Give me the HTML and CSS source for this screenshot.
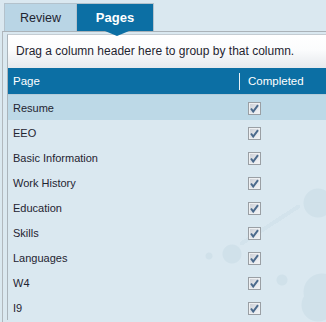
FILE: index.html
```html
<!DOCTYPE html>
<html>
<head>
<meta charset="utf-8">
<link rel="stylesheet" href="styles.css">
</head>
<body>
<div class="tabs">
  <div class="tab">Review</div>
  <div class="tab active">Pages</div>
</div>
<div class="panel">
  <div class="grid">
    <div class="group-bar">Drag a column header here to group by that column.</div>
    <div class="row head">
      <div class="c1">Page</div>
      <div class="c2"><span class="sep"></span>Completed</div>
    </div>
    <div class="row sel"><div class="c1">Resume</div><div class="c2"><span class="cb"><svg viewBox="0 0 11 11"><path d="M2 5.5 L4.2 8.5 L9 2.2" /></svg></span></div></div>
    <div class="row"><div class="c1">EEO</div><div class="c2"><span class="cb"><svg viewBox="0 0 11 11"><path d="M2 5.5 L4.2 8.5 L9 2.2" /></svg></span></div></div>
    <div class="row"><div class="c1">Basic Information</div><div class="c2"><span class="cb"><svg viewBox="0 0 11 11"><path d="M2 5.5 L4.2 8.5 L9 2.2" /></svg></span></div></div>
    <div class="row"><div class="c1">Work History</div><div class="c2"><span class="cb"><svg viewBox="0 0 11 11"><path d="M2 5.5 L4.2 8.5 L9 2.2" /></svg></span></div></div>
    <div class="row"><div class="c1">Education</div><div class="c2"><span class="cb"><svg viewBox="0 0 11 11"><path d="M2 5.5 L4.2 8.5 L9 2.2" /></svg></span></div></div>
    <div class="row"><div class="c1">Skills</div><div class="c2"><span class="cb"><svg viewBox="0 0 11 11"><path d="M2 5.5 L4.2 8.5 L9 2.2" /></svg></span></div></div>
    <div class="row"><div class="c1">Languages</div><div class="c2"><span class="cb"><svg viewBox="0 0 11 11"><path d="M2 5.5 L4.2 8.5 L9 2.2" /></svg></span></div></div>
    <div class="row"><div class="c1">W4</div><div class="c2"><span class="cb"><svg viewBox="0 0 11 11"><path d="M2 5.5 L4.2 8.5 L9 2.2" /></svg></span></div></div>
    <div class="row"><div class="c1">I9</div><div class="c2"><span class="cb"><svg viewBox="0 0 11 11"><path d="M2 5.5 L4.2 8.5 L9 2.2" /></svg></span></div></div>
  </div>
</div>
</body>
</html>
```
FILE: styles.css
```css
html, body {
  margin: 0;
  padding: 0;
}
body {
  width: 326px;
  height: 322px;
  overflow: hidden;
  font-family: "Liberation Sans", Arial, sans-serif;
  color: #1f2430;
  background-color: #dae8f0;
  background-image:
    radial-gradient(circle at 172px 103px, #d0e1ea 0 4px, transparent 5px),
    radial-gradient(circle at 232px 254px, #d0e1ea 0 9px, transparent 10px),
    radial-gradient(circle at 282px 280px, #d0e1ea 0 5px, transparent 6px),
    radial-gradient(circle at 209px 256px, #d0e1ea 0 3px, transparent 4px),
    radial-gradient(circle at 318px 305px, #d0e1ea 0 16px, transparent 17px),
    radial-gradient(circle at 322px 292px, #d0e1ea 0 18px, transparent 19px),
    radial-gradient(circle at 318px 203px, #d0e1ea 0 14px, transparent 15px),
    linear-gradient(-33deg, transparent 0 calc(50% - 2px), #d3e3ec calc(50% - 2px) calc(50% + 2px), transparent calc(50% + 2px));
  background-size: auto, auto, auto, auto, auto, auto, auto, 60px 40px;
  background-position: 0 0, 0 0, 0 0, 0 0, 0 0, 0 0, 0 0, 240px 205px;
  background-repeat: no-repeat;
}
.tabs {
  display: flex;
  padding: 3px 0 0 4px;
  height: 28px;
}
.tab {
  width: 71px;
  height: 27px;
  border: 1px solid #b3c2cc;
  border-bottom: none;
  background: #b9d5e5;
  font-size: 12.5px;
  text-align: center;
  line-height: 28px;
  color: #1f2430;
}
.tab.active {
  position: relative;
  width: 76px;
  background: #0c6fa4;
  color: #fff;
  font-weight: bold;
  font-size: 13px;
  border-left: none;
}
.tab.active::after {
  content: "";
  position: absolute;
  left: 28px;
  top: 27px;
  border-left: 12px solid transparent;
  border-right: 12px solid transparent;
  border-top: 5px solid #0c6fa4;
  z-index: 2;
}
.panel {
  margin-left: 2px;
  width: 400px;
  border-left: 1px solid #b1b8bd;
  border-top: 1px solid #aab2b8;
  padding: 2px 0 0 4px;
  height: 300px;
}
.grid {
  border-left: 1px solid #aab4bb;
  border-top: 1px solid #c4ccd2;
}
.group-bar {
  height: 33px;
  line-height: 33px;
  padding-left: 8px;
  font-size: 12px;
  background: linear-gradient(#ffffff 0%, #fbfcfd 45%, #e6e9ed 100%);
  color: #1f2430;
  white-space: nowrap;
}
.row {
  display: flex;
  height: 25px;
  align-items: center;
  font-size: 11px;
  padding-top: 1px;
  box-sizing: border-box;
}
.row.head {
  height: 27px;
  padding-top: 0;
  background: #0c6fa4;
  color: #fff;
  font-size: 11.5px;
  border-bottom: 1px solid #b5ccd9;
}
.row.sel {
  background: #bdd9e7;
}
.c1 {
  width: 226px;
  padding-left: 5px;
}
.c2 {
  display: flex;
  align-items: center;
  padding-left: 9px;
}
.sep {
  display: block;
  width: 1px;
  height: 17px;
  background: #e8f1f6;
  margin-left: -9px;
  margin-right: 8px;
}
.cb {
  display: block;
  width: 11px;
  height: 11px;
  border: 1px solid #9a9fa4;
  background: linear-gradient(135deg, #c8ccd3 0%, #e6e8ec 60%, #f4f5f7 100%);
  box-shadow: inset 0 0 0 1px #eef0f2;
}
.cb svg {
  display: block;
  width: 11px;
  height: 11px;
}
.cb path {
  fill: none;
  stroke: #4b6a8c;
  stroke-width: 2;
}
```
